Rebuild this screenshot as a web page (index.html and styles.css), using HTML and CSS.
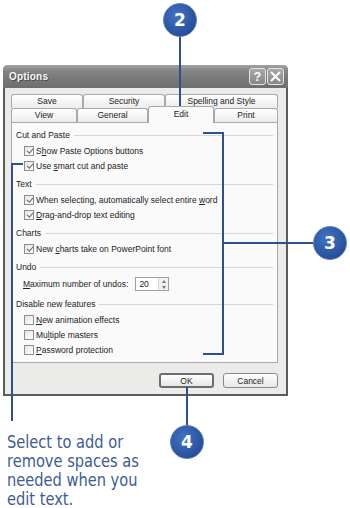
FILE: index.html
```html
<!DOCTYPE html>
<html>
<head>
<meta charset="utf-8">
<title>Options</title>
<link rel="stylesheet" href="styles.css">
</head>
<body>
<div class="page">
  <div class="dialog">
    <div class="titlebar">
      <span class="title">Options</span>
      <div class="tbtns">
        <span class="tbtn">?</span>
        <span class="tbtn"><svg width="11" height="11" viewBox="0 0 11 11"><path d="M1.5 1.5 L9.5 9.5 M9.5 1.5 L1.5 9.5" stroke="#fff" stroke-width="2" stroke-linecap="round"/></svg></span>
      </div>
    </div>
    <div class="dbody">
      <div class="tabs">
        <div class="tabrow">
          <div class="tab t-save">Save</div>
          <div class="tab t-security">Security</div>
          <div class="tab t-spelling">Spelling and Style</div>
        </div>
        <div class="tabrow">
          <div class="tab t-view">View</div>
          <div class="tab t-general">General</div>
          <div class="tab t-edit active">Edit</div>
          <div class="tab t-print">Print</div>
        </div>
      </div>
      <div class="panel">
        <div class="group">
          <div class="ghead">Cut and Paste</div>
          <div class="row"><span class="cb on"></span><span>S<u>h</u>ow Paste Options buttons</span></div>
          <div class="row"><span class="cb on"></span><span>Use <u>s</u>mart cut and paste</span></div>
        </div>
        <div class="group">
          <div class="ghead">Text</div>
          <div class="row"><span class="cb on"></span><span>When selecting, automatically select entire <u>w</u>ord</span></div>
          <div class="row"><span class="cb on"></span><span><u>D</u>rag-and-drop text editing</span></div>
        </div>
        <div class="group">
          <div class="ghead">Charts</div>
          <div class="row"><span class="cb on"></span><span>New <u>c</u>harts take on PowerPoint font</span></div>
        </div>
        <div class="group">
          <div class="ghead">Undo</div>
          <div class="row spinrow"><span><u>M</u>aximum number of undos:</span>
            <span class="spin"><span class="spinval">20</span><span class="spinbtns"><span class="sb up"></span><span class="sb down"></span></span></span>
          </div>
        </div>
        <div class="group">
          <div class="ghead">Disable new features</div>
          <div class="row"><span class="cb"></span><span><u>N</u>ew animation effects</span></div>
          <div class="row"><span class="cb"></span><span>Mu<u>l</u>tiple masters</span></div>
          <div class="row"><span class="cb"></span><span><u>P</u>assword protection</span></div>
        </div>
      </div>
      <div class="buttons">
        <span class="btn default">OK</span>
        <span class="btn">Cancel</span>
      </div>
    </div>
  </div>

  <p class="caption">Select to add or<br>remove spaces as<br>needed when you<br>edit text.</p>

  <svg class="callouts" width="350" height="508" viewBox="0 0 350 508">
    <g stroke="#2f4f8f" stroke-width="2" fill="none">
      <path d="M180 36 V110"/>
      <path d="M203 133 H223 V354 H203"/>
      <path d="M223 243 H314"/>
      <path d="M187 387 V428"/>
      <path d="M23 164 H12 V421"/>
    </g>
  </svg>
  <div class="badge b2">2</div>
  <div class="badge b3">3</div>
  <div class="badge b4">4</div>
</div>
</body>
</html>
```

FILE: styles.css
```css
html, body {
  margin: 0;
  padding: 0;
  background: #fff;
}

.page {
  position: relative;
  width: 350px;
  height: 508px;
  overflow: hidden;
  background: #fff;
  font-family: "Liberation Sans", Arial, sans-serif;
}

/* ---------- dialog ---------- */
.dialog {
  margin: 65px 0 0 3px;
  width: 285px;
  height: 331px;
  box-sizing: border-box;
  border: 2px solid #5c5c5c;
  border-top: none;
  border-radius: 5px 5px 0 0;
  background: #ebebe9;
  display: flex;
  flex-direction: column;
}

.titlebar {
  height: 23px;
  margin: 0 -2px;
  border-radius: 5px 5px 0 0;
  background: linear-gradient(#a3a3a3 0%, #858585 25%, #787878 60%, #6e6e6e 100%);
  display: flex;
  align-items: center;
  justify-content: space-between;
  padding: 0 4px 0 6px;
}

.title {
  color: #f6f6f6;
  font-weight: bold;
  font-size: 10px;
  letter-spacing: 0.2px;
  text-shadow: 1px 1px 0 #4a4a4a;
}

.tbtns {
  display: flex;
  gap: 1px;
}

.tbtn {
  width: 17px;
  height: 17px;
  box-sizing: border-box;
  border: 1px solid #e6e6e6;
  border-radius: 3px;
  background: linear-gradient(#a9a9a9, #888);
  color: #fff;
  font-weight: bold;
  font-size: 12px;
  display: flex;
  align-items: center;
  justify-content: center;
}

.dbody {
  flex: 1;
  padding: 6px 8px 0 6px;
  display: flex;
  flex-direction: column;
}

/* ---------- tabs ---------- */
.tabs {
  display: flex;
  flex-direction: column;
}

.tabrow {
  display: flex;
  align-items: flex-end;
  height: 14px;
}

.tab {
  height: 14px;
  box-sizing: border-box;
  border: 1px solid #a9a9a9;
  border-bottom: none;
  border-radius: 3px 3px 0 0;
  background: linear-gradient(#ffffff, #ececec);
  font-size: 8.5px;
  line-height: 13px;
  color: #222;
  text-align: center;
}

.t-save { width: 72px; }
.t-security { width: 82px; }
.t-spelling { width: 113px; }
.t-view { width: 66px; }
.t-general { width: 71px; }
.t-edit { width: 66px; }
.t-print { width: 64px; }

.tab.active {
  position: relative;
  z-index: 2;
  height: 17px;
  margin-bottom: -1px;
  background: #fafafa;
  line-height: 14px;
}

/* ---------- panel ---------- */
.panel {
  height: 241px;
  box-sizing: border-box;
  border: 1px solid #a9a9a9;
  background: #fafafa;
  padding: 4px 4px 0 4px;
  font-size: 8.5px;
  color: #222;
}

.group + .group {
  margin-top: 3px;
}

.ghead {
  height: 16px;
  display: flex;
  align-items: center;
  gap: 4px;
}

.ghead::after {
  content: "";
  flex: 1;
  border-top: 1px solid #d6d6d6;
}

.row {
  height: 15px;
  display: flex;
  align-items: center;
  padding-left: 8px;
}

.row u {
  text-decoration-thickness: 1px;
}

.cb {
  position: relative;
  width: 10px;
  height: 10px;
  box-sizing: border-box;
  border: 1px solid #8e8e8e;
  background: linear-gradient(135deg, #e6e6e6, #fdfdfd);
  margin-right: 2px;
  flex: none;
}

.cb.on::after {
  content: "";
  position: absolute;
  left: 2.5px;
  top: 0.5px;
  width: 2.5px;
  height: 5px;
  border: solid #6a6a6a;
  border-width: 0 1.5px 1.5px 0;
  transform: rotate(40deg);
}

.spinrow {
  height: 18px;
  padding-left: 7px;
}

.spin {
  margin-left: 7px;
  width: 34px;
  height: 14px;
  box-sizing: border-box;
  border: 1px solid #a0a0a0;
  background: #fff;
  display: flex;
  align-items: center;
  justify-content: space-between;
}

.spinval {
  padding-left: 3px;
}

.spinbtns {
  width: 9px;
  height: 12px;
  display: flex;
  flex-direction: column;
  border-left: 1px solid #d5d5d5;
}

.sb {
  flex: 1;
  display: flex;
  align-items: center;
  justify-content: center;
  background: #f1f1f1;
}

.sb::before {
  content: "";
  border-left: 2.5px solid transparent;
  border-right: 2.5px solid transparent;
}

.sb.up::before {
  border-bottom: 3px solid #777;
}

.sb.down::before {
  border-top: 3px solid #777;
}

/* ---------- buttons ---------- */
.buttons {
  margin-top: 10px;
  display: flex;
  justify-content: flex-end;
  gap: 9px;
}

.btn {
  width: 55px;
  height: 15px;
  box-sizing: border-box;
  border: 1px solid #8a8a8a;
  border-radius: 3px;
  background: linear-gradient(#ffffff, #e6e6e6);
  font-size: 8.5px;
  color: #222;
  display: flex;
  align-items: center;
  justify-content: center;
}

.btn.default {
  border: 2px solid #6e6e6e;
}

/* ---------- caption ---------- */
.caption {
  margin: 36px 0 0 7px;
  width: 200px;
  font-family: "DejaVu Sans", sans-serif;
  font-size: 18.5px;
  line-height: 19px;
  color: #3d5b95;
  transform: scaleX(0.79);
  transform-origin: left top;
}

/* ---------- callouts ---------- */
.callouts {
  position: absolute;
  left: 0;
  top: 0;
  pointer-events: none;
}

.badge {
  position: absolute;
  width: 34px;
  height: 34px;
  box-sizing: border-box;
  border-radius: 50%;
  border: 1px solid #5d7fbe;
  background: radial-gradient(circle at 40% 35%, #4373c2 0%, #2c58a5 55%, #1f4388 100%);
  color: #fff;
  font-family: "DejaVu Sans", sans-serif;
  font-weight: bold;
  font-size: 17px;
  display: flex;
  align-items: center;
  justify-content: center;
}

.b2 { left: 163px; top: 3px; }
.b3 { left: 313px; top: 226px; }
.b4 { left: 170px; top: 425px; }
```
